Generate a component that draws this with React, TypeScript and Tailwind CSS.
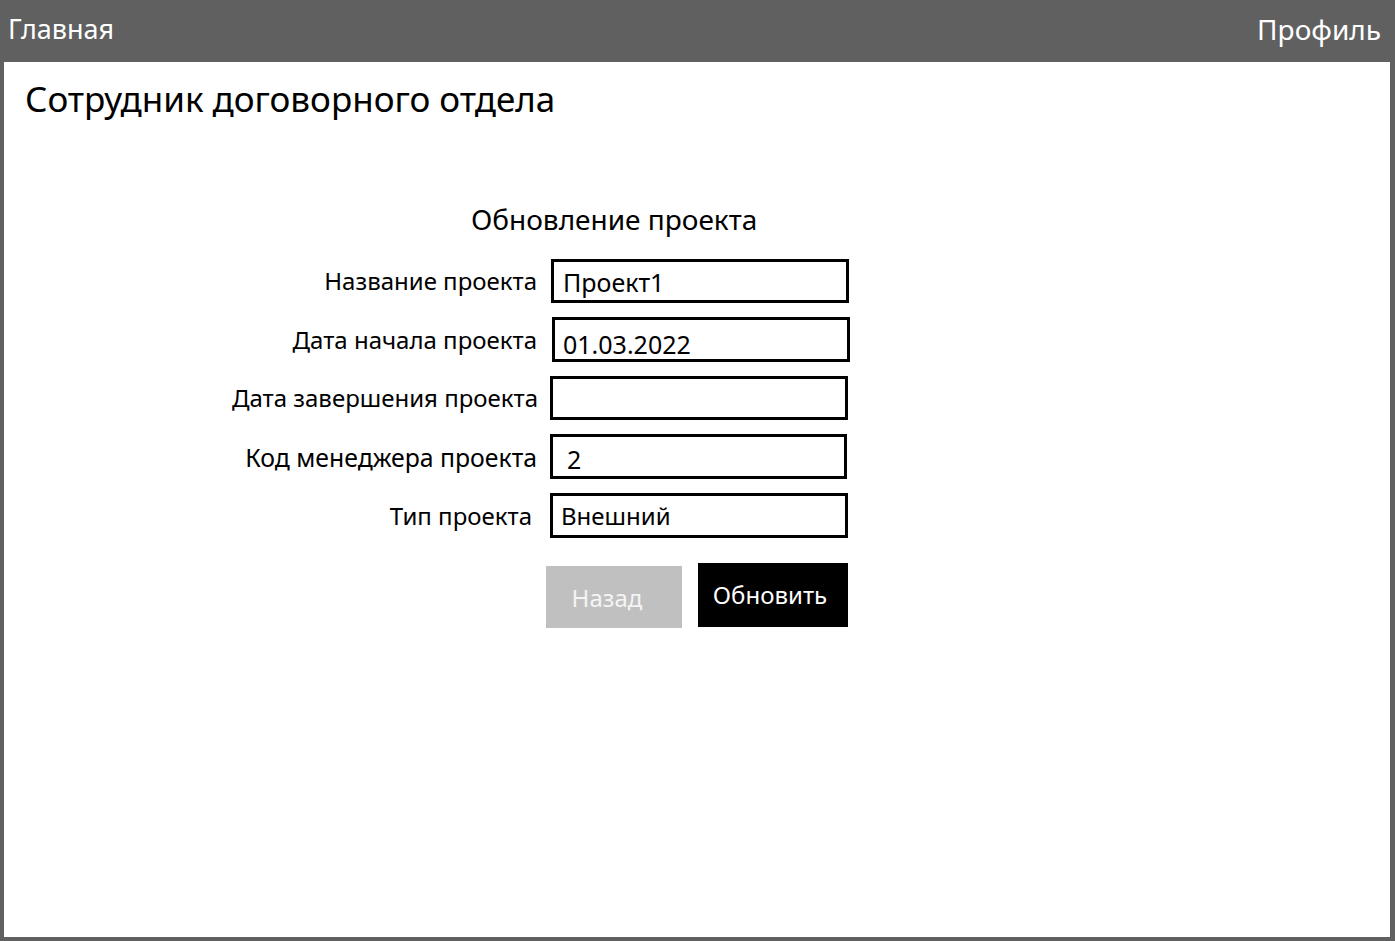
const font = { fontFamily: '"Noto Sans", "Open Sans", sans-serif' };

type Row = {
  label: string;
  value: string;
  labelCls: string;
  boxCls: string;
  textCls: string;
};

const rows: Row[] = [
  {
    label: "Название проекта",
    value: "Проект1",
    labelCls: "pr-[1px] text-[24px]",
    boxCls: "ml-[13px] h-[44px] w-[298px]",
    textCls: "pl-[9px] pt-[1px] text-[25px]",
  },
  {
    label: "Дата начала проекта",
    value: "01.03.2022",
    labelCls: "pr-[1px] text-[24px]",
    boxCls: "ml-[14px] h-[45px] w-[298px]",
    textCls: "pl-[8px] pt-[9px] text-[25px]",
  },
  {
    label: "Дата завершения проекта",
    value: "",
    labelCls: "pr-0 mr-[-1px] text-[24px]",
    boxCls: "ml-[13px] h-[44px] w-[298px]",
    textCls: "pl-[10px] text-[25px]",
  },
  {
    label: "Код менеджера проекта",
    value: "2",
    labelCls: "pr-[1px] text-[24.8px]",
    boxCls: "ml-[12px] h-[45px] w-[297px]",
    textCls: "pl-[14px] pt-[4px] text-[25px]",
  },
  {
    label: "Тип проекта",
    value: "Внешний",
    labelCls: "pr-[6px] text-[24px]",
    boxCls: "ml-[12px] h-[45px] w-[298px]",
    textCls: "pl-[8px] text-[24px]",
  },
];

export default function App() {
  return (
    <div className="flex h-[941px] w-full flex-col bg-[#606060]" style={font}>
      {/* top bar */}
      <div className="flex h-[62px] items-center justify-between pb-[4px] pl-[8px] pr-[14px] text-[27px] text-white">
        <span>Главная</span>
        <span className="text-[28px]">Профиль</span>
      </div>

      {/* page */}
      <div className="mb-[4px] ml-[4px] mr-[5px] flex-1 bg-white">
        <h1 className="pl-[21px] pt-[14px] text-[35px] leading-[46px] text-black">
          Сотрудник договорного отдела
        </h1>

        <div className="pl-[467px] pt-[78px] text-[28px] leading-[38px] text-black">
          Обновление проекта
        </div>

        <div className="ml-[224px] mt-[21px] flex w-[640px] flex-col gap-[14px]">
          {rows.map((r) => (
            <div key={r.label} className="flex items-center">
              <div className={`w-[310px] text-right leading-[32px] text-black ${r.labelCls}`}>
                {r.label}
              </div>
              <div className={`flex items-center border-[3px] border-black bg-white ${r.boxCls}`}>
                <span className={`leading-[32px] text-black ${r.textCls}`}>{r.value}</span>
              </div>
            </div>
          ))}

          <div className="mt-[11px] flex items-start gap-[16px] pl-[318px]">
            <button className="mt-[3px] flex h-[62px] w-[136px] items-center justify-center bg-[#c0c0c0] pr-[14px] pt-[1px] text-[24px] text-[#f4f4f4]">
              Назад
            </button>
            <button className="flex h-[64px] w-[150px] items-center justify-center bg-black pr-[6px] text-[24px] text-white">
              Обновить
            </button>
          </div>
        </div>
      </div>
    </div>
  );
}
